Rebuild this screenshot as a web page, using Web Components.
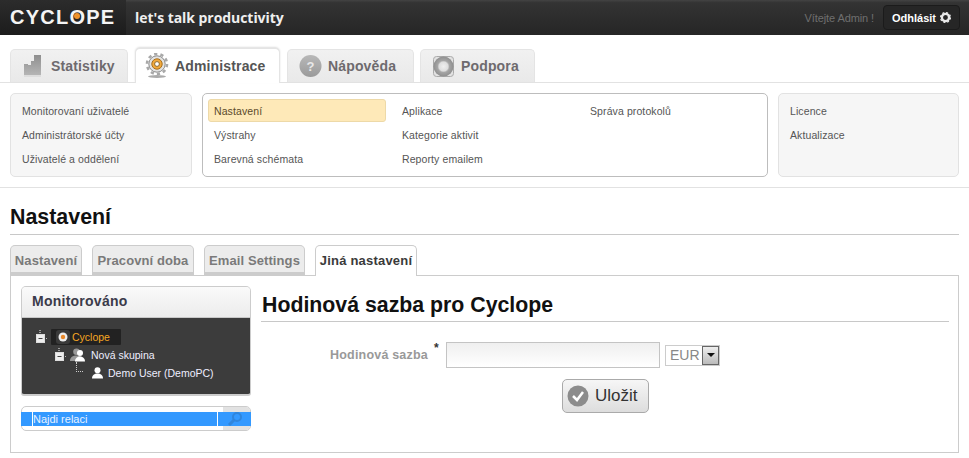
<!DOCTYPE html>
<html>
<head>
<meta charset="utf-8">
<style>
  html, body { margin: 0; padding: 0; background: #fff; }
  body { font-family: "Liberation Sans", Arial, sans-serif; width: 969px; height: 458px; overflow: hidden; }
</style>
</head>
<body>
<app-header></app-header>
<main-tabs></main-tabs>
<sub-menu></sub-menu>
<page-title>Nastavení</page-title>
<settings-tabs></settings-tabs>
<settings-box>
  <monitor-tree slot="side"></monitor-tree>
  <rate-form></rate-form>
</settings-box>

<script>
class AppHeader extends HTMLElement {
  constructor () {
    super()
    this.attachShadow({ mode: 'open' })
  }

  connectedCallback () {
    this.shadowRoot.innerHTML = /* html */ `
      <style>
        :host { display: flex; height: 35px; color: #fff; background: linear-gradient(#434343, #333 8%, #262626); }
        .logo { width: 126px; display: flex; align-items: center; padding-left: 10px; box-sizing: border-box; background: linear-gradient(#2c2c2c, #1c1c1c); font: bold 20px "Liberation Sans", sans-serif; letter-spacing: 1.25px; color: #f4f4f4; }
        .logo i { font-style: normal; position: relative; }
        .logo i::after { content: ''; position: absolute; left: 5px; top: 7px; width: 6px; height: 6px; border-radius: 50%; background: #ee922a; }
        .slogan { margin-left: 9px; font: bold 14px/35px "Open Sans", "Liberation Sans", sans-serif; letter-spacing: -.05px; color: #efefef; }
        .right { margin-left: auto; display: flex; align-items: center; padding-right: 9px; }
        .hello { font-size: 11px; letter-spacing: -.1px; color: #6f6f6f; margin-right: 9px; }
        .logout { width: 77px; height: 25px; box-sizing: border-box; border: 1px solid #1b1b1b; border-radius: 4px; background: #262626; font-weight: bold; font-size: 11px; color: #fff; display: flex; align-items: center; justify-content: center; gap: 4px; }
        svg { display: block; }
      </style>
      <div class="logo">CYCL<i>O</i>PE</div>
      <div class="slogan">let's talk productivity</div>
      <div class="right">
        <span class="hello">Vítejte Admin !</span>
        <span class="logout">Odhlásit
          <svg width="11" height="11" viewBox="0 0 11 11"><circle cx="5.500" cy="5.500" r="3.600" fill="none" stroke="#e8e8e8" stroke-width="2.400"/><circle cx="5.500" cy="5.500" r="5" fill="none" stroke="#e8e8e8" stroke-width="1.200" stroke-dasharray="2 1.930"/></svg>
        </span>
      </div>`
  }
}

class MainTabs extends HTMLElement {
  constructor () {
    super()
    this.attachShadow({ mode: 'open' })
  }

  connectedCallback () {
    const icons = {
      stats: '<svg width="17" height="23" viewBox="0 0 17 23"><defs><linearGradient id="s" x1="0" y1="0" x2="0" y2="1"><stop offset="0" stop-color="#8f8f8f"/><stop offset="1" stop-color="#b5b5b5"/></linearGradient></defs><path d="M0 9h4v1h3V6h3V0h7v20H0z" fill="url(#s)"/><path d="M0 20h17v2H0z" fill="#ddd"/></svg>',
      admin: '<svg width="24" height="26" viewBox="0 0 24 26"><circle cx="12" cy="11" r="8.200" fill="#e2e2e2" stroke="#8b8b8b"/><circle cx="12" cy="11" r="10" fill="none" stroke="#a8a8a8" stroke-width="2.600" stroke-dasharray="3.200 3.080"/><circle cx="12" cy="11" r="5.200" fill="#f2a93b" stroke="#a86f1c"/><circle cx="12" cy="11" r="2.400" fill="#fff" stroke="#8b6a30"/><ellipse cx="12" cy="23.500" rx="9" ry="1.500" fill="#aaa"/></svg>',
      help: '<svg width="23" height="24" viewBox="0 0 23 24"><defs><linearGradient id="h" x1="0" y1="0" x2="0" y2="1"><stop offset="0" stop-color="#b8b8b8"/><stop offset="1" stop-color="#9a9a9a"/></linearGradient></defs><circle cx="11.500" cy="12" r="11" fill="url(#h)"/><text x="11.500" y="16.500" font-size="13" font-weight="bold" text-anchor="middle" fill="#e8e8e8" font-family="Liberation Sans">?</text></svg>',
      support: '<svg width="21" height="21" viewBox="0 0 21 21"><defs><radialGradient id="p"><stop offset="0" stop-color="#efefef"/><stop offset=".45" stop-color="#dedede"/><stop offset=".6" stop-color="#a5a5a5"/><stop offset="1" stop-color="#8f8f8f"/></radialGradient></defs><rect x=".5" y=".5" width="20" height="20" rx="3" fill="#e2e2e2" stroke="#aaa"/><circle cx="10.500" cy="10.500" r="10" fill="url(#p)"/></svg>'
    }
    // label, icon, tab width, space before tab, icon inset, icon-label gap
    const tabs = [
      ['Statistiky', 'stats', 118, 0, 13, 10],
      ['Administrace', 'admin', 145, 7, 9, 6],
      ['Nápověda', 'help', 127, 7, 11, 6],
      ['Podpora', 'support', 115, 6, 12, 7]
    ]
    this.shadowRoot.innerHTML = /* html */ `
      <style>
        :host { display: flex; height: 48px; padding: 13px 0 0 10px; box-sizing: border-box; border-bottom: 1px solid #e2e2e2; margin-bottom: 10px; }
        .tab { height: 33px; margin-top: 1px; box-sizing: border-box; border: 1px solid #e4e4e4; border-bottom: 0; border-radius: 5px 5px 0 0; background: linear-gradient(#f1f1f1, #e9e9e9); display: flex; align-items: center; font-weight: bold; font-size: 14px; letter-spacing: .15px; color: #6e6a6e; }
        .tab.on { height: 35px; margin-top: 0; position: relative; background: #fff; box-shadow: 0 -1px 2px #ddd; color: #555; }
        svg { display: block; }
      </style>
      ${tabs.map(([label, icon, w, space, inset, gap], i) => `<div class="tab${i === 1 ? ' on' : ''}" style="width:${w}px;margin-left:${space}px;padding-left:${inset}px;gap:${gap}px">${icons[icon]}<span>${label}</span></div>`).join('')}`
  }
}

class SubMenu extends HTMLElement {
  constructor () {
    super()
    this.attachShadow({ mode: 'open' })
  }

  connectedCallback () {
    this.shadowRoot.innerHTML = /* html */ `
      <style>
        :host { display: flex; padding: 0 10px; gap: 10px; height: 94px; border-bottom: 1px solid #e2e2e2; font-size: 10.5px; letter-spacing: .1px; color: #555; }
        .box { height: 84px; box-sizing: border-box; border: 1px solid #e2e2e2; border-radius: 5px; background: #f6f6f6; padding: 5px; display: grid; grid-auto-rows: 24px; }
        .first { width: 182px; padding-left: 11px; }
        .last { width: 181px; padding-left: 11px; }
        .mid { width: 566px; background: #fff; border-color: #bdbdbd; grid-template-columns: 178px 178px 178px; column-gap: 10px; grid-auto-flow: column; grid-template-rows: repeat(3, 24px); }
        .item { display: flex; align-items: center; padding-left: 6px; }
        .first .item, .last .item { padding-left: 0; }
        .on { background: #fee9b8; border: 1px solid #edd9a8; border-radius: 3px; padding-left: 5px; color: #5b4a2a; box-sizing: border-box; height: 23px; }
      </style>
      <div class="box first"><div class="item">Monitorovaní uživatelé</div><div class="item">Administrátorské účty</div><div class="item">Uživatelé a oddělení</div></div>
      <div class="box mid">
        <div class="item on">Nastavení</div><div class="item">Výstrahy</div><div class="item">Barevná schémata</div>
        <div class="item">Aplikace</div><div class="item">Kategorie aktivit</div><div class="item">Reporty emailem</div>
        <div class="item">Správa protokolů</div>
      </div>
      <div class="box last"><div class="item">Licence</div><div class="item">Aktualizace</div></div>`
  }
}

class PageTitle extends HTMLElement {
  constructor () {
    super()
    this.attachShadow({ mode: 'open' })
  }

  connectedCallback () {
    this.shadowRoot.innerHTML = /* html */ `
      <style>
        :host { display: block; margin: 16px 10px 0; height: 30px; border-bottom: 1px solid #c8c8c8; font: bold 21.4px/26px "Liberation Sans", sans-serif; color: #111; }
      </style>
      <slot></slot>`
  }
}

class SettingsTabs extends HTMLElement {
  constructor () {
    super()
    this.attachShadow({ mode: 'open' })
  }

  connectedCallback () {
    const tabs = [['Nastavení', 72], ['Pracovní doba', 102], ['Email Settings', 101], ['Jiná nastavení', 102]]
    this.shadowRoot.innerHTML = /* html */ `
      <style>
        :host { display: flex; gap: 10px; margin: 10px 10px 0; height: 30px; align-items: flex-end; font-weight: bold; font-size: 13px; letter-spacing: .1px; color: #7a7a7a; }
        .tab { height: 30px; box-sizing: border-box; border: 1px solid #ccc; border-bottom: 3px solid #ccc; border-radius: 5px 5px 0 0; background: #ececec; display: flex; align-items: center; justify-content: center; padding-top: 2px; }
        .on { height: 31px; margin-bottom: -1px; background: #fff; color: #3a3a3a; border-bottom: 0; position: relative; padding-top: 0; padding-bottom: 1px; letter-spacing: .2px; }
      </style>
      ${tabs.map(([label, w], i) => `<div class="tab${i === 3 ? ' on' : ''}" style="width:${w}px">${label}</div>`).join('')}`
  }
}

class SettingsBox extends HTMLElement {
  constructor () {
    super()
    this.attachShadow({ mode: 'open' })
  }

  connectedCallback () {
    this.shadowRoot.innerHTML = /* html */ `
      <style>
        :host { display: flex; margin: 0 10px; width: 949px; height: 178px; box-sizing: border-box; border: 1px solid #ccc; padding: 10px 10px 0 10px; gap: 10px; }
        ::slotted([slot=side]) { flex: none; }
        .main { flex: 1; min-width: 0; }
      </style>
      <slot name="side"></slot>
      <div class="main"><slot></slot></div>`
  }
}

class MonitorTree extends HTMLElement {
  constructor () {
    super()
    this.attachShadow({ mode: 'open' })
  }

  connectedCallback () {
    const user = '<svg width="11" height="12" viewBox="0 0 11 12"><circle cx="5.500" cy="3.200" r="3" fill="#fff"/><path d="M0 11.500c0-3.500 2.500-5 5.500-5s5.500 1.500 5.500 5z" fill="#fff"/></svg>'
    const expander = '<svg width="14" height="14" viewBox="0 0 14 14"><path d="M5 0v1M5 2v1" stroke="#fff"/><rect x="1.500" y="4.500" width="8" height="8" fill="#eee" stroke="#ddd"/><path d="M3.500 8.500h4" stroke="#444"/><path d="M11 8.500h1" stroke="#bbb"/></svg>'
    this.shadowRoot.innerHTML = /* html */ `
      <style>
        :host { display: block; width: 230px; }
        .panel { height: 110px; box-sizing: border-box; border: 1px solid #ccc; border-bottom-width: 2px; border-radius: 5px 5px 3px 3px; overflow: hidden; }
        .head { height: 31px; box-sizing: border-box; border-bottom: 1px solid #c8c8c8; background: linear-gradient(#fafafa, #ececec); padding-left: 10px; font: bold 14px/28px "Liberation Sans", sans-serif; color: #3b3b4a; letter-spacing: .25px; }
        .tree { height: 77px; background: #3c3c3c; font-size: 10.5px; color: #eef; padding-top: 10px; box-sizing: border-box; }
        .row { display: flex; align-items: center; height: 18px; position: relative; }
        .row svg { display: block; flex: none; }
        .one { padding-left: 13px; }
        .sel { display: flex; align-items: center; gap: 2px; height: 16px; width: 70px; background: #222; margin-left: 2px; padding-left: 5px; box-sizing: border-box; color: #f5a623; border-radius: 1px; }
        .two { padding-left: 32px; gap: 2px; }
        .two span { margin-left: 1px; }
        .three { padding-left: 54px; gap: 5px; }
        .three::before { content: ''; position: absolute; left: 54px; top: -2px; width: 6px; height: 9px; border-left: 1px dotted #ccc; border-bottom: 1px dotted #ccc; }
        .three svg { margin-left: 16px; }
        .search { margin-top: 10px; height: 25px; box-sizing: border-box; border: 1px solid #ccc; border-radius: 5px; position: relative; }
        .btn { position: absolute; right: 0; top: 0; bottom: 0; width: 27px; background: #e2e2e2; border-radius: 0 4px 4px 0; }
        .found { position: absolute; left: -1px; right: -1px; top: 5px; height: 14px; background: #3399ff; display: flex; font-size: 11px; color: #e8f2ff; line-height: 14px; }
        .found .in { margin-left: 11px; border-left: 1px solid #fff; border-right: 1px solid #fff; width: 186px; box-sizing: border-box; }
        .found svg { position: absolute; left: 206px; top: 0; }
      </style>
      <div class="panel">
        <div class="head">Monitorováno</div>
        <div class="tree">
          <div class="row one">${expander}
            <div class="sel"><svg width="14" height="14" viewBox="0 0 14 14"><rect width="14" height="14" rx="3" fill="#3a3a3a"/><circle cx="7" cy="7" r="4.500" fill="#eee"/><circle cx="7" cy="7" r="2.200" fill="#e9892b"/></svg><span>Cyclope</span></div>
          </div>
          <div class="row two">${expander}
            <svg width="18" height="14" viewBox="0 0 18 14"><circle cx="6.500" cy="3.800" r="3.300" fill="#999"/><path d="M0 13c0-4 3-5.500 6.500-5.500S13 9 13 13z" fill="#999"/><circle cx="10" cy="5" r="3" fill="#fff"/><path d="M5 13.500c0-3.500 2.500-5 5-5s5 1.500 5 5z" fill="#fff"/></svg>
            <span>Nová skupina</span>
          </div>
          <div class="row three">${user}<span>Demo User (DemoPC)</span></div>
        </div>
      </div>
      <div class="search">
        <div class="btn"></div>
        <div class="found"><div class="in">Najdi relaci</div>
          <svg width="16" height="14" viewBox="0 0 16 14"><circle cx="10" cy="5" r="4" fill="none" stroke="#2f85dc" stroke-width="2"/><path d="M7 8L2 13" stroke="#2f85dc" stroke-width="3"/></svg>
        </div>
      </div>`
  }
}

class RateForm extends HTMLElement {
  constructor () {
    super()
    this.attachShadow({ mode: 'open' })
  }

  connectedCallback () {
    this.shadowRoot.innerHTML = /* html */ `
      <style>
        :host { display: block; }
        h2 { margin: 6px 0 0; height: 30px; box-sizing: border-box; border-bottom: 1px solid #c8c8c8; font: bold 21.3px/27px "Liberation Sans", sans-serif; color: #111; width: 688px; text-indent: 1px; }
        .line { display: flex; align-items: center; height: 26px; margin-top: 20px; }
        label { width: 174px; padding-left: 69px; box-sizing: border-box; font-weight: bold; font-size: 12.5px; letter-spacing: .2px; color: #999; white-space: nowrap; position: relative; }
        label b { position: absolute; left: 173px; top: -7px; color: #333; font-size: 12px; }
        .input { margin-left: 11px; width: 214px; height: 26px; box-sizing: border-box; border: 1px solid #c4c4c4; background: linear-gradient(#efefef, #fff); }
        .sel { margin-left: 5px; width: 55px; height: 21px; box-sizing: border-box; border: 1px solid #ccc; display: flex; align-items: center; font-size: 14px; color: #888; padding-left: 4px; position: relative; }
        .arrow { position: absolute; right: 0; top: 0; width: 17px; height: 19px; box-sizing: border-box; border: 1px solid #666; background: linear-gradient(#eee, #bbb); display: flex; align-items: center; justify-content: center; }
        .arrow::after { content: ''; border: 4px solid transparent; border-top: 4px solid #111; border-bottom: 0; }
        .save { margin: 11px 0 0 301px; width: 87px; height: 34px; box-sizing: border-box; border: 1px solid #aaa; border-radius: 5px; background: linear-gradient(#f6f6f6, #ddd); display: flex; align-items: center; gap: 6px; padding-left: 4px; font-size: 17px; color: #333; }
        .save svg { display: block; flex: none; }
      </style>
      <h2>Hodinová sazba pro Cyclope</h2>
      <div class="line">
        <label>Hodinová sazba<b>*</b></label>
        <div class="input"></div>
        <div class="sel">EUR<span class="arrow"></span></div>
      </div>
      <div class="save">
        <svg width="22" height="22" viewBox="0 0 22 22"><circle cx="11" cy="11" r="10.500" fill="#8c8c8c"/><path d="M6 11l4 4 6-8" fill="none" stroke="#fff" stroke-width="2.500"/></svg>
        <span>Uložit</span>
      </div>`
  }
}

customElements.define('app-header', AppHeader)
customElements.define('main-tabs', MainTabs)
customElements.define('sub-menu', SubMenu)
customElements.define('page-title', PageTitle)
customElements.define('settings-tabs', SettingsTabs)
customElements.define('settings-box', SettingsBox)
customElements.define('monitor-tree', MonitorTree)
customElements.define('rate-form', RateForm)
</script>
</body>
</html>
